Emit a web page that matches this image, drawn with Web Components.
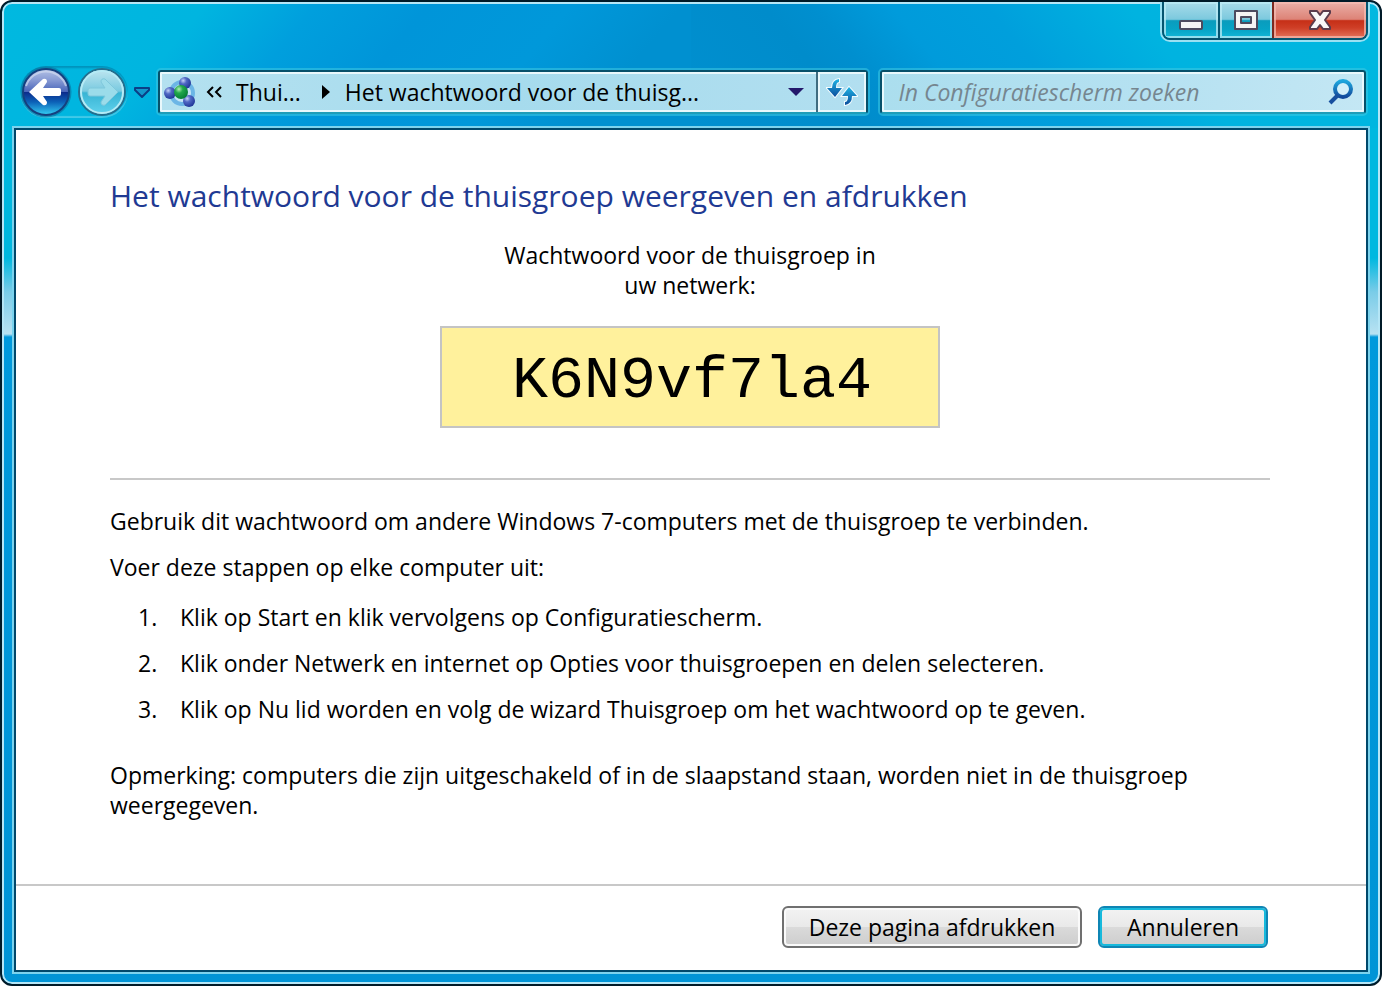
<!DOCTYPE html>
<html lang="nl">
<head>
<meta charset="UTF-8">
<meta name="viewport" content="width=device-width, initial-scale=1">
<title>Thuisgroep</title>
<style>
    body {
        margin: 0;
        background: #fff;
        color: #000;
        font-family: "Open Sans", "Noto Sans", sans-serif;
        font-size: 23px;
        line-height: 30px;
    }
</style>
</head>
<body>

<aero-window>
    <caption-buttons slot="caption"></caption-buttons>
    <nav-buttons slot="nav"></nav-buttons>
    <address-bar slot="nav" parent="Thui..." current="Het wachtwoord voor de thuisg..."></address-bar>
    <search-box slot="nav" placeholder="In Configuratiescherm zoeken"></search-box>

    <homegroup-page>
        <span slot="title">Het wachtwoord voor de thuisgroep weergeven en afdrukken</span>
        <span slot="lead">Wachtwoord voor de thuisgroep in<br>uw netwerk:</span>
        <span slot="password">K6N9vf7la4</span>
    </homegroup-page>

    <aero-button slot="footer" size="wide">Deze pagina afdrukken</aero-button>
    <aero-button slot="footer" active>Annuleren</aero-button>
</aero-window>

<script>
class AeroWindow extends HTMLElement {
    constructor() {
        super();
        this.attachShadow({ mode: 'open' });
        this.shadowRoot.innerHTML = `
            <style>
                :host {
                    display: flex;
                    flex-direction: column;
                    box-sizing: border-box;
                    min-height: 100vh;
                    padding: 0 10px 10px;
                    border: 2px solid #001a28;
                    border-radius: 12px;
                    background:
                        linear-gradient(130deg, #00b9e0 0%, #00b5e0 26%, #009fdd 40%, #0095d9 54%, #0098da 72%, #0090d0 86%, #0090d0 100%) left top / 50% 126px no-repeat,
                        linear-gradient(50deg, #0090d0 0%, #008ccb 22%, #008fcf 28%, #009bdb 38%, #009fdc 50%, #00b3e0 68%, #00b8e0 100%) right top / 50% 126px no-repeat,
                        linear-gradient(180deg, #00b8e0 0, #00b8e0 256px, #7acce8 290px, #b8e2f2 332px, #0099dc 335px, #0094d6 100%);
                    box-shadow: inset 0 0 0 2px #b5e6f6;
                }
                .caption {
                    display: flex;
                    justify-content: flex-end;
                    height: 40px;
                }
                .nav {
                    display: flex;
                    align-items: center;
                    gap: 12px;
                    padding: 24px 4px 8px 8px;
                }
                .client {
                    flex: 1;
                    display: flex;
                    flex-direction: column;
                    border: 2px solid #00486b;
                    outline: 2px solid #7bd3ee;
                    margin: 2px;
                    background: #fff;
                }
                main {
                    flex: 1;
                }
                footer {
                    display: flex;
                    justify-content: flex-end;
                    gap: 16px;
                    padding: 20px 98px 22px;
                    border-top: 2px solid #c8c8c8;
                }
            </style>
            <div class="caption"><slot name="caption"></slot></div>
            <div class="nav"><slot name="nav"></slot></div>
            <div class="client">
                <main><slot></slot></main>
                <footer><slot name="footer"></slot></footer>
            </div>
        `;
    }
}

class CaptionButtons extends HTMLElement {
    constructor() {
        super();
        this.attachShadow({ mode: 'open' });
        this.shadowRoot.innerHTML = `
            <style>
                :host {
                    display: flex;
                    box-sizing: border-box;
                    height: 38px;
                    border: 2px solid #075570;
                    border-top: 0;
                    border-radius: 0 0 8px 8px;
                    box-shadow: 0 0 0 2px #9be0f2;
                    clip-path: inset(0 -2px -2px -2px);
                    overflow: hidden;
                    margin-right: 2px;
                }
                button {
                    display: flex;
                    align-items: center;
                    justify-content: center;
                    width: 56px;
                    padding: 0;
                    border: 0;
                    border-right: 2px solid #075570;
                    background: linear-gradient(180deg, #a9dcea 0%, #7cc9de 48%, #0a9cbd 52%, #06a3c5 75%, #14b7d8 100%);
                    box-shadow: inset 0 0 0 2px rgba(190, 236, 246, .75);
                }
                .max {
                    width: 54px;
                    border-right-color: #7c2a20;
                }
                .close {
                    width: 92px;
                    border-right: 0;
                    background: linear-gradient(180deg, #eab0a8 0%, #dd8377 48%, #c62f17 52%, #cf3f27 72%, #e5735c 100%);
                    box-shadow: inset 0 0 0 2px rgba(245, 190, 180, .7);
                }
            </style>
            <button type="button" aria-label="Minimaliseren">
                <svg width="26" height="26" viewBox="0 0 26 26">
                    <rect x="2" y="14" width="22" height="8" rx="1" fill="#f4f4f4" stroke="#4c4a5e" stroke-width="2"/>
                </svg>
            </button>
            <button type="button" class="max" aria-label="Maximaliseren">
                <svg width="26" height="26" viewBox="0 0 26 26">
                    <path d="M2 4h22v18H2z M8 10v6h10v-6z" fill="#f4f4f4" fill-rule="evenodd" stroke="#4c4a5e" stroke-width="2" stroke-linejoin="round"/>
                </svg>
            </button>
            <button type="button" class="close" aria-label="Sluiten">
                <svg width="26" height="26" viewBox="0 0 26 26">
                    <path d="M3 4h7l3 4 3-4h7v2l-5 7 5 7v2h-7l-3-4-3 4H3v-2l5-7-5-7z" fill="#f8f8f8" stroke="#5a3c4c" stroke-width="2" stroke-linejoin="round"/>
                </svg>
            </button>
        `;
    }
}

class NavButtons extends HTMLElement {
    constructor() {
        super();
        this.attachShadow({ mode: 'open' });
        this.shadowRoot.innerHTML = `
            <style>
                :host {
                    display: flex;
                    align-items: center;
                    gap: 4px;
                    height: 52px;
                }
                .pair {
                    display: flex;
                    gap: 4px;
                    border-radius: 26px;
                    box-shadow: inset 0 2px 2px rgba(0, 110, 150, .5), inset 0 -2px 1px rgba(130, 220, 240, .5);
                }
                button {
                    padding: 0;
                    border: 0;
                    background: none;
                }
                svg {
                    display: block;
                }
            </style>
            <div class="pair">
                <button type="button" aria-label="Vorige">
                    <svg width="52" height="52" viewBox="0 0 52 52">
                        <defs>
                            <linearGradient id="back" x1="0" y1="0" x2="0" y2="1">
                                <stop offset="0" stop-color="#b4c2e6"/>
                                <stop offset=".25" stop-color="#8699d3"/>
                                <stop offset=".49" stop-color="#4a66ba"/>
                                <stop offset=".51" stop-color="#0c2c8c"/>
                                <stop offset=".72" stop-color="#0c62b8"/>
                                <stop offset="1" stop-color="#35d0f4"/>
                            </linearGradient>
                        </defs>
                        <circle cx="26" cy="26" r="24" fill="none" stroke="#0a6f9c" stroke-width="3" opacity=".6"/>
                        <circle cx="26" cy="26" r="23" fill="url(#back)" stroke="#15407e" stroke-width="2"/>
                        <path d="M6 20a21 21 0 0 1 40 0" fill="none" stroke="#d0daf0" stroke-width="2" opacity=".7"/>
                        <path d="M9 26 23 13q4-1 4 3l-4 6h16q2 0 2 2v4q0 2-2 2H23l4 6q0 4-4 3z" fill="#fff"/>
                    </svg>
                </button>
                <button type="button" aria-label="Volgende">
                    <svg width="52" height="52" viewBox="0 0 52 52">
                        <defs>
                            <linearGradient id="next" x1="0" y1="0" x2="0" y2="1">
                                <stop offset="0" stop-color="#c0e6f0"/>
                                <stop offset=".48" stop-color="#79cae0"/>
                                <stop offset=".52" stop-color="#38b4d4"/>
                                <stop offset="1" stop-color="#62d4ee"/>
                            </linearGradient>
                        </defs>
                        <circle cx="26" cy="26" r="23" fill="url(#next)" stroke="#246f8e" stroke-width="2"/>
                        <circle cx="26" cy="26" r="21" fill="none" stroke="#b5eaf5" stroke-width="2"/>
                        <path d="M42 26 29 13q-4-1-4 3l4 6H14q-2 0-2 2v4q0 2 2 2h15l-4 6q0 4 4 3z" fill="#9bdcea" stroke="#7fc8dc"/>
                    </svg>
                </button>
            </div>
            <button type="button" aria-label="Recente pagina's">
                <svg width="20" height="16" viewBox="0 0 20 16">
                    <path d="M3 4h14v2l-7 7-7-7z" fill="#1398cc" stroke="#0b3f86" stroke-width="2" stroke-linejoin="round"/>
                </svg>
            </button>
        `;
    }
}

// Shared look of the two glass text fields
const glassStyles = `
    :host {
        display: flex;
        box-sizing: border-box;
        height: 44px;
        border: 2px solid #07506a;
        border-bottom-color: #1f9db8;
        border-radius: 3px;
        outline: 2px solid rgba(60, 200, 225, .55);
        box-shadow: inset 0 0 0 2px #e9f8fc;
        background: linear-gradient(90deg, #b4e1f0, #a6dbed 50%, #b2dff0);
    }
    button {
        display: flex;
        align-items: center;
        justify-content: center;
        padding: 0;
        border: 0;
        background: none;
        color: inherit;
        font: inherit;
    }
`;

class AddressBar extends HTMLElement {
    constructor() {
        super();
        this.attachShadow({ mode: 'open' });
    }

    connectedCallback() {
        this.shadowRoot.innerHTML = `
            <style>
                ${glassStyles}
                :host {
                    flex: 710 1 0;
                    margin-left: -6px;
                }
                .home {
                    width: 40px;
                }
                .crumb {
                    margin-right: 20px;
                }
                .sep {
                    width: 10px;
                    margin-right: 14px;
                }
                .more {
                    width: 20px;
                    margin: 0 12px 0 4px;
                }
                .list {
                    width: 40px;
                    margin-left: auto;
                }
                .refresh {
                    width: 50px;
                    border-left: 2px solid #3f6c80;
                    box-shadow: inset 0 0 0 2px #e9f8fc;
                }
            </style>
            <button type="button" class="home" aria-label="Thuisgroep">
                <svg width="32" height="30" viewBox="0 0 32 30">
                    <defs>
                        <radialGradient id="blue" cx=".35" cy=".3" r=".7">
                            <stop offset="0" stop-color="#c4d2f8"/>
                            <stop offset=".4" stop-color="#5068c4"/>
                            <stop offset="1" stop-color="#23399a"/>
                        </radialGradient>
                        <radialGradient id="green" cx=".35" cy=".3" r=".7">
                            <stop offset="0" stop-color="#b0f0b0"/>
                            <stop offset=".4" stop-color="#22a84c"/>
                            <stop offset="1" stop-color="#078038"/>
                        </radialGradient>
                    </defs>
                    <circle cx="18" cy="16" r="11" fill="#c8e6f6" stroke="#6cb6e6" stroke-width="4"/>
                    <circle cx="21" cy="6" r="6" fill="url(#blue)"/>
                    <circle cx="6" cy="16" r="6" fill="url(#blue)"/>
                    <circle cx="25" cy="24" r="6" fill="url(#blue)"/>
                    <circle cx="17" cy="15" r="7" fill="url(#green)"/>
                </svg>
            </button>
            <button type="button" class="more" aria-label="Bovenliggende mappen">
                <svg width="18" height="16" viewBox="0 0 18 16">
                    <path d="M8 3 3 8l5 5M16 3l-5 5 5 5" fill="none" stroke="#000" stroke-width="2"/>
                </svg>
            </button>
            <button type="button" class="crumb">${this.getAttribute('parent')}</button>
            <button type="button" class="sep" aria-label="Submappen">
                <svg width="10" height="16" viewBox="0 0 10 16">
                    <path d="M1 1v14l8-7z" fill="#000"/>
                </svg>
            </button>
            <button type="button" class="crumb">${this.getAttribute('current')}</button>
            <button type="button" class="list" aria-label="Vorige locaties">
                <svg width="16" height="10" viewBox="0 0 16 10">
                    <path d="M0 1h16L8 9z" fill="#23186b"/>
                </svg>
            </button>
            <button type="button" class="refresh" aria-label="Vernieuwen">
                <svg width="32" height="28" viewBox="0 0 32 28">
                    <defs>
                        <linearGradient id="arrows" x1="0" y1="0" x2="0" y2="1">
                            <stop offset="0" stop-color="#1fb4e4"/>
                            <stop offset="1" stop-color="#0b4c9c"/>
                        </linearGradient>
                    </defs>
                    <g fill="url(#arrows)" stroke="#f2fbff" stroke-width="2" paint-order="stroke">
                        <path d="M13 1q-7 1-7 9H1l8 9 7-9h-6q0-6 3-6z"/>
                        <path d="M19 27q7-1 7-9h5l-8-9-7 9h6q0 6-3 6z"/>
                    </g>
                </svg>
            </button>
        `;
    }
}

class SearchBox extends HTMLElement {
    constructor() {
        super();
        this.attachShadow({ mode: 'open' });
    }

    connectedCallback() {
        const text = this.getAttribute('placeholder');
        this.shadowRoot.innerHTML = `
            <style>
                ${glassStyles}
                :host {
                    flex: 484 1 0;
                    background: linear-gradient(100deg, #abdeee, #b5e1f1 55%, #c4e7f4);
                }
                input {
                    flex: 1;
                    min-width: 0;
                    padding: 0 0 0 16px;
                    border: 0;
                    outline: 0;
                    background: none;
                    font: italic 23px/30px "Open Sans", "Noto Sans", sans-serif;
                }
                input::placeholder {
                    color: #76868f;
                    opacity: 1;
                }
                button {
                    width: 46px;
                }
            </style>
            <input type="text" aria-label="${text}" placeholder="${text}">
            <button type="button" aria-label="Zoeken">
                <svg width="26" height="26" viewBox="0 0 26 26">
                    <defs>
                        <linearGradient id="lens" x1="0" y1="0" x2="0" y2="1">
                            <stop offset="0" stop-color="#1ea7de"/>
                            <stop offset="1" stop-color="#134a9c"/>
                        </linearGradient>
                    </defs>
                    <circle cx="15" cy="10" r="8" fill="#d4f0fa" stroke="url(#lens)" stroke-width="4"/>
                    <path d="m10 16-8 8" stroke="#174f9e" stroke-width="4"/>
                </svg>
            </button>
        `;
    }
}

class HomegroupPage extends HTMLElement {
    constructor() {
        super();
        this.attachShadow({ mode: 'open' });
        this.shadowRoot.innerHTML = `
            <style>
                :host {
                    display: block;
                    padding: 46px 96px 24px 94px;
                }
                h1 {
                    margin: 0 0 24px;
                    color: #1f3a93;
                    font-size: 30px;
                    font-weight: 400;
                    line-height: 40px;
                }
                .lead {
                    margin: 0;
                    text-align: center;
                }
                .password {
                    box-sizing: border-box;
                    width: 500px;
                    max-width: 100%;
                    margin: 26px auto 50px;
                    padding: 23px 0 15px 4px;
                    border: 2px solid #c4c4c4;
                    background: #fff19c;
                    font: 60px/60px "Liberation Mono", monospace;
                    text-align: center;
                }
                hr {
                    margin: 0 0 26px;
                    border: 0;
                    border-top: 2px solid #c8c8c8;
                }
                p {
                    margin: 0 0 16px;
                }
                ol {
                    display: flex;
                    flex-direction: column;
                    gap: 16px;
                    margin: 20px 0 36px;
                    padding: 0 0 0 28px;
                    list-style: none;
                }
                li {
                    display: flex;
                }
                .num {
                    width: 42px;
                }
            </style>
            <h1><slot name="title"></slot></h1>
            <p class="lead"><slot name="lead"></slot></p>
            <div class="password"><slot name="password"></slot></div>
            <hr>
            <p>Gebruik dit wachtwoord om andere Windows 7-computers met de thuisgroep te verbinden.</p>
            <p>Voer deze stappen op elke computer uit:</p>
            <ol>
                <li><span class="num">1.</span><span>Klik op Start en klik vervolgens op Configuratiescherm.</span></li>
                <li><span class="num">2.</span><span>Klik onder Netwerk en internet op Opties voor thuisgroepen en delen selecteren.</span></li>
                <li><span class="num">3.</span><span>Klik op Nu lid worden en volg de wizard Thuisgroep om het wachtwoord op te geven.</span></li>
            </ol>
            <p>Opmerking: computers die zijn uitgeschakeld of in de slaapstand staan, worden niet in de thuisgroep weergegeven.</p>
        `;
    }
}

class AeroButton extends HTMLElement {
    constructor() {
        super();
        this.attachShadow({ mode: 'open' });
        this.shadowRoot.innerHTML = `
            <style>
                :host {
                    display: block;
                    width: 170px;
                }
                :host([size="wide"]) {
                    width: 300px;
                }
                button {
                    width: 100%;
                    height: 42px;
                    padding: 0;
                    border: 2px solid #707070;
                    border-radius: 6px;
                    background: linear-gradient(180deg, #f3f3f3 0%, #e9e9e9 49%, #dadada 51%, #cdcdcd 100%);
                    box-shadow: inset 0 0 0 2px #fafafa;
                    color: inherit;
                    font: inherit;
                }
                :host([active]) button {
                    border-color: #0f85b4;
                    box-shadow: inset 0 0 0 2px #17b9dc;
                }
            </style>
            <button type="button"><slot></slot></button>
        `;
    }
}

customElements.define('aero-window', AeroWindow);
customElements.define('caption-buttons', CaptionButtons);
customElements.define('nav-buttons', NavButtons);
customElements.define('address-bar', AddressBar);
customElements.define('search-box', SearchBox);
customElements.define('homegroup-page', HomegroupPage);
customElements.define('aero-button', AeroButton);
</script>
</body>
</html>
